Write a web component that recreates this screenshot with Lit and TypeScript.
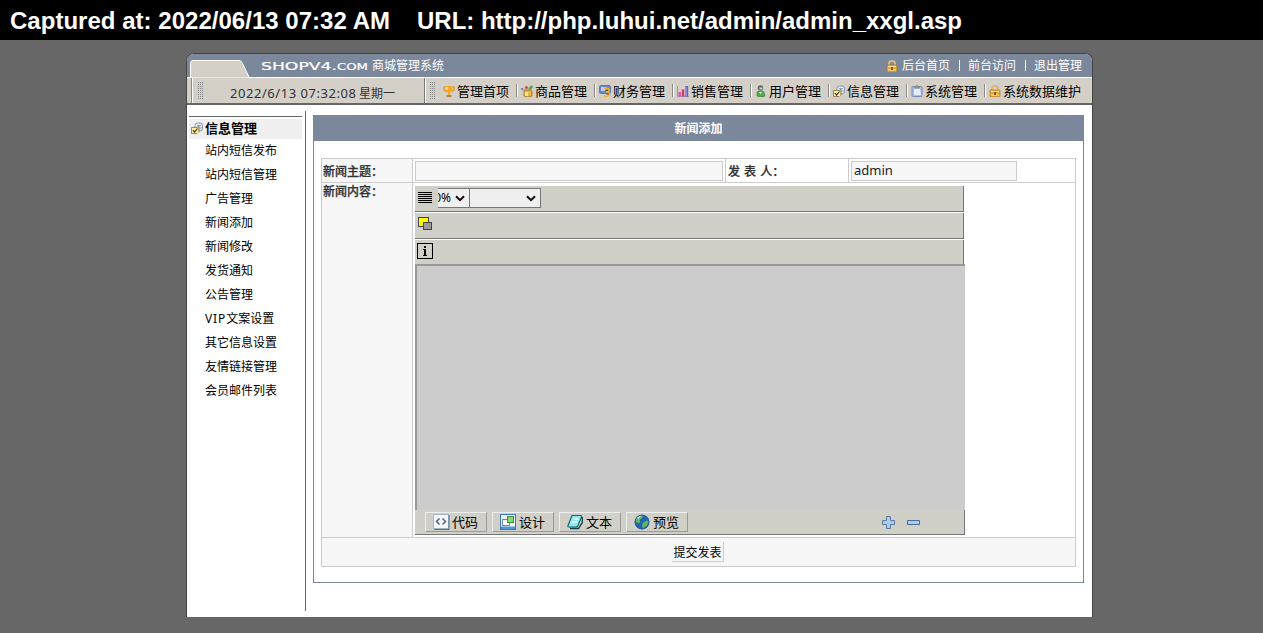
import { LitElement, html, css, svg } from "lit";
import { customElement } from "lit/decorators.js";

const icon = (name: string, size = 12) =>
  html`<svg class="ico" width=${size} height=${size} viewBox="0 0 12 12">${glyphs[name]}</svg>`;

const lock = svg`<path d="M3 6V3.500Q3 1 6 1t3 2.500V6" fill="none" stroke="#d9b684" stroke-width="2"/><rect x="1" y="5" width="10" height="7" rx="1" fill="#e5a93c" stroke="#a8752c" stroke-width=".7"/><path d="M2 6.500h8M2 10h8" stroke="#ffe39a"/><path d="M6 7v3" stroke="#7b4308" stroke-width="1.600"/>`;
const pad = svg`<rect x="4" y="1" width="7.500" height="8" rx="2.500" fill="#e6eef9" stroke="#7d93c0"/><path d="M6 3.500h4M7 6h4" stroke="#8ea6d2"/><path d="M.5 5.500H6l2-1.500v5.500l-2 2H.5z" fill="#e9c75c" stroke="#907033" stroke-width=".8"/><rect x="1" y="6" width="6" height="5" fill="#fff0a8"/><path d="M2 8l1.500 2L6.500 6.500" fill="none" stroke="#222" stroke-width="1.100"/>`;

const glyphs: Record<string, unknown> = {
  lock,
  pad,
  cup: svg`<path d="M2.500 2H.8v2q0 2 2.500 2M9.500 2h1.700v2q0 2-2.500 2" fill="none" stroke="#e09a22" stroke-width="1.200"/><path d="M2.500 1h7v3.500Q9 7.500 7 8v2H5V8Q3 7.500 2.500 4.500z" fill="#f5a926"/><path d="M4 2v3" stroke="#ffe79c" stroke-width="1.300"/><path d="M3.500 10h5v2h-5z" fill="#b0834a"/>`,
  goods: svg`<path d="M3 5h7l1 2v4q-4 2-8 0V7z" fill="#e2b44c" stroke="#9a6d1c" stroke-width=".8"/><path d="M4 7h3v4H4z" fill="#ffe28c"/><path d="M7 4l3-4 2 2-2 3z" fill="#6f9a5c"/><circle cx="5.500" cy="2.500" r="1.500" fill="#c44f5f"/><circle cx="1.200" cy="4" r="1.100" fill="#5d62c8"/>`,
  money: svg`<rect x=".5" y=".5" width="11" height="8" rx="1" fill="#6687c9" stroke="#6478a8"/><path d="M2 2h5v4H2z" fill="#b9cff3"/><path d="M5 4q5-2 5 1 0 2-3 2 4 0 3 3-1 2-5 1" fill="none" stroke="#e9b23c" stroke-width="1.700"/><path d="M6 5.500h3M7 9h3" stroke="#634319" stroke-width=".8"/>`,
  chart: svg`<path d="M.5 1v10.500H12" fill="none" stroke="#9c8fb0"/><path d="M1.500 7H4v4.500H1.500z" fill="#d15d9b"/><path d="M4.800 4.500h2.500v7H4.800z" fill="#c83c70"/><path d="M8.200 1h3v10.500h-3z" fill="#6b62c5"/><path d="M9 2v9" stroke="#aaa8f2"/>`,
  user: svg`<circle cx="5.500" cy="3" r="2.800" fill="#616a61"/><path d="M4.500 2.500h3v2h-3z" fill="#c9cfc5"/><path d="M2 7q3.500-3 7 0l1 4q-4 2-8 0z" fill="#54ad4b" stroke="#3b7739" stroke-width=".6"/><path d="M4 7l1.500 2L7 7" fill="#eef9e8"/>`,
  clip: svg`<rect x="1" y="1.500" width="10" height="10" rx="1" fill="#a9bfe2" stroke="#7186b2" stroke-width=".9"/><path d="M3 4h6l1 6H3z" fill="#e4edfb"/><path d="M3.500 3q0-2 2.500-2.500Q8.500 1 8.500 3z" fill="#a6a368" stroke="#74734b" stroke-width=".5"/>`,
};

const NAV: [string, string][] = [
  ["cup", "管理首项"], ["goods", "商品管理"], ["money", "财务管理"], ["chart", "销售管理"],
  ["user", "用户管理"], ["pad", "信息管理"], ["clip", "系统管理"], ["lock", "系统数据维护"],
];
const SIDE = ["站内短信发布", "站内短信管理", "广告管理", "新闻添加", "新闻修改", "发货通知", "公告管理", html`<span class="vip">VIP</span>文案设置`, "其它信息设置", "友情链接管理", "会员邮件列表"];

const MODES = [
  { label: "代码", art: svg`<rect x=".5" y=".5" width="15" height="14" fill="#f6f9fc" stroke="#a4b5c4"/><path d="M1 15.500h15V1" fill="none" stroke="#54718d"/><path d="M6.500 4.500l-3 3 3 3M9.500 4.500l3 3-3 3" fill="none" stroke="#566b80" stroke-width="1.600"/>` },
  { label: "设计", art: svg`<rect x=".5" y=".5" width="15" height="15" fill="#e9f3fc" stroke="#3e78b4"/><path d="M1 12.500h14v2.500H1z" fill="#5295d4"/><rect x="2.500" y="5.500" width="7" height="6" fill="#fff" stroke="#6c8bad"/><rect x="7.500" y="2.500" width="6" height="6" fill="#8fd572" stroke="#408b3b"/>` },
  { label: "文本", art: svg`<path d="M5 1.500h8.500q1.500 0 1 1.500L11 11.500q-.5 1.500-2 1.500H1.500q-1 0-.5-1.500z" fill="#8eeaec" stroke="#12616b" stroke-width="1.100"/><path d="M15.300 3v5.500L11.500 14.500H3" fill="none" stroke="#123f4d" stroke-width="1.300"/><path d="M6.500 5h5M5 8h5" stroke="#e6ffff" stroke-width="1.300"/>` },
  { label: "预览", art: svg`<circle cx="8" cy="8" r="7.300" fill="#2563ad"/><path d="M2 4.500q3-4 7-3l-1 3-2 1v3l-2 1-2-2zM9 8.500l4-2 2 1-2 4-4 3-1-3z" fill="#59b760"/><path d="M3 3.500q2-2 4-1.500L4 5.500z" fill="#c3e9e0"/><circle cx="8" cy="8" r="7" fill="none" stroke="#1f5a95" stroke-width=".8"/>` },
];

@customElement("app-root")
export class AppRoot extends LitElement {
  static styles = css`
    :host { display: block; width: 1263px; height: 633px; overflow: hidden; background: #676767; color: #000;
      font: 12px/16px "Noto Sans", "Noto Sans CJK SC", sans-serif; }
    * { box-sizing: border-box; }
    svg { display: block; flex: none; }
    .banner { height: 40px; background: #000; }
    .page { width: 907px; margin: 13px 0 0 186px; height: 564px; background: #fff; border: solid #444; border-width: 1px 1px 0; border-radius: 8px 8px 0 0; overflow: hidden; }
    .top { height: 23px; background: #7b879b; display: flex; }
    .brand { margin-left: 11px; }
    .links { margin-left: auto; display: flex; align-items: center; padding: 0 10px 0 0; color: #fff; }
    .links .ico { margin-right: 4px; }
    .bar { width: 1px; height: 11px; background: #fff; margin: 0 8px 0 9px; }
    .nav { height: 28px; background: #d4d0c8; border-top: 1px solid #fff; border-bottom: 2px solid #666; display: flex; }
    .clock { width: 238px; border-right: 1px solid #777; display: flex; align-items: center; }
    .edge { width: 2px; margin: 0 4px; height: 25px; border-left: 1px solid #888; background: #fff; }
    .grip { width: 6px; height: 18px; flex: none; background: conic-gradient(#888 25%, transparent 0) 0 0 / 2px 2px; }
    .menu { display: flex; align-items: center; border-left: 1px solid #fff; padding-left: 3px; font-size: 13px; }
    .menu .grip { margin-right: 8px; }
    .item { display: flex; align-items: center; white-space: nowrap; }
    .item .ico { margin-right: 2px; }
    .sep { width: 1px; height: 13px; background: #888; margin: 0 4px 0 7px; box-shadow: 1px 0 #fff; }
    .body { display: flex; height: 512px; }
    .side { width: 119px; height: 500px; margin-top: 6px; padding: 5px 3px 0 2px; border-right: 1px solid #666; }
    .head { display: flex; align-items: center; height: 23px; border-top: 1px solid #666; box-shadow: inset 0 2px #fff; background: #f0f0f0; font-size: 13px; line-height: 14px; font-weight: bold; padding: 0 0 1px 2px; }
    .head .ico { margin-right: 2px; }
    .link { height: 24px; line-height: 24px; padding-left: 16px; }
    .vip { letter-spacing: .9px; }
    .card { margin: 10px 0 0 7px; width: 771px; height: 468px; border: 1px solid #7b879b; }
    .title { height: 26px; margin-top: -1px; background: #7b879b; color: #fff; font-weight: bold; text-align: center; line-height: 27px; }
    .grid { display: grid; margin: 17px 7px 0; width: 755px; height: 409px; color: #333; font-weight: 500;
      grid-template: 23px 354px 28px / 90px 312px 122px 226px; gap: 1px; padding: 1px; background: #ccc; }
    .grid > div { background: #fff; padding: 2px 2px; }
    .grid > .shade { background: #f7f7f7; padding-left: 1px; }
    .grid > .wide { grid-column: 2 / 5; padding-top: 3px; }
    .grid > .all { grid-column: 1 / 5; text-align: center; padding-top: 4px; }
    .lab, .content { -webkit-text-stroke: .25px #333; }
    .lab { line-height: 21px; }
    .author { word-spacing: 1px; }
    .grid > .content { padding-top: 1px; }
    .field { height: 20px; border: 1px solid #ccc; background: #f7f7f7; width: 308px; line-height: 17px; padding-left: 2px; color: #222; font-size: 13px; font-weight: 400; }
    .field.short { width: 166px; }
    .editor { width: 550px; height: 349px; display: flex; flex-direction: column; }
    .tools { width: 549px; height: 26px; margin-bottom: 1px; background: #d0cfc8; border: solid #777; border-width: 0 1px 1px 0; display: flex; align-items: center; padding: 0 0 1px 2px; flex: none; }
    .tools.last { margin: 0; height: 24px; border-bottom: 0; padding-bottom: 2px; }
    .drop { height: 20px; border: 1px solid #767676; background: #efefef; display: flex; align-items: center; justify-content: flex-end; padding-right: 4px; color: #000; width: 72px; overflow: hidden; }
    .drop.cut { width: 32px; border-left: 0; margin: 0 -1px 0 5px; }
    .drop span { margin-right: 4px; font-weight: 400; }
    .area { flex: 1; background: #ccc; border: solid #999; border-width: 2px 0 0 2px; }
    .modes { height: 25px; flex: none; background: #d0cfc8; border: solid #777; border-width: 0 1px 1px 0; display: flex; align-items: center; padding: 0 44px 0 10px; gap: 5px; color: #000; font-size: 13px; font-weight: 400; }
    .mode { width: 62px; height: 20px; border: 1px solid; border-color: #eee #999 #999 #eee; display: flex; align-items: center; gap: 2px; padding-left: 7px; }
    .zoomers { margin-left: auto; display: flex; gap: 12px; align-items: center; }
    .send { display: inline-block; height: 20px; line-height: 21px; border: solid #ccc; border-width: 0 1px 1px 0; padding: 0 1px; color: #000; font-weight: 400; }
  `;

  private chevron() {
    return html`<svg width="10" height="7" viewBox="0 0 10 7"><path d="M1 1.200l4 4 4-4" fill="none" stroke="#111" stroke-width="2"/></svg>`;
  }

  render() {
    return html`
      <div class="banner">
        <svg width="1263" height="40" font-family="Liberation Sans, Arial, sans-serif" font-size="24" font-weight="bold" fill="#fff">
          <text x="10" y="29" textLength="380">Captured at: 2022/06/13 07:32 AM</text>
          <text x="417" y="29" textLength="545">URL: http://php.luhui.net/admin/admin_xxgl.asp</text>
        </svg>
      </div>
      <div class="page">
        <div class="top">
          <svg width="63" height="24" viewBox="0 0 63 24"><path d="M3.500 24V9Q3.500 6.500 6 6.500h46q2 0 3 2L62.500 24z" fill="#d4d0c8" stroke="#fff"/></svg>
          <svg class="brand" width="190" height="23" fill="#fff">
            <text x="0" y="16" font-family="DejaVu Sans" font-size="10.500" textLength="76" lengthAdjust="spacingAndGlyphs" stroke="#fff" stroke-width=".2">SHOPV4.</text>
            <text x="76" y="16" font-family="DejaVu Sans" font-size="9" textLength="31" lengthAdjust="spacingAndGlyphs" stroke="#fff" stroke-width=".2">COM</text>
            <text x="111" y="16" font-family="Noto Sans CJK SC" font-size="12">商城管理系统</text>
          </svg>
          <div class="links">${icon("lock")}<span>后台首页</span><i class="bar"></i><span>前台访问</span><i class="bar"></i><span>退出管理</span></div>
        </div>
        <div class="nav">
          <div class="clock"><i class="edge"></i><i class="grip"></i>
            <svg width="200" height="24" fill="#333"><text x="27" y="19" font-family="Noto Sans" font-size="13" textLength="126">2022/6/13 07:32:08</text><text x="156" y="19" font-family="Noto Sans CJK SC" font-size="12">星期一</text></svg>
          </div>
          <div class="menu"><i class="grip"></i>
            ${NAV.map(([name, label], i) => html`${i ? html`<i class="sep"></i>` : ""}<span class="item">${icon(name)}${label}</span>`)}
          </div>
        </div>
        <div class="body">
          <div class="side">
            <div class="head">${icon("pad")}信息管理</div>
            ${SIDE.map((t) => html`<div class="link">${t}</div>`)}
          </div>
          <div class="card">
            <div class="title">新闻添加</div>
            <div class="grid">
              <div class="shade lab">新闻主题：</div>
              <div><div class="field"></div></div>
              <div class="lab author">发 表 人：</div>
              <div><div class="field short">admin</div></div>
              <div class="shade content">新闻内容：</div>
              <div class="wide">
                <div class="editor">
                  <div class="tools">
                    <svg width="16" height="12"><path d="M1 .5h14M1 2.500h14M1 4.500h14M1 6.500h14M1 8.500h14M1 10.500h14" stroke="#000"/></svg>
                    <div class="drop cut"><span>0%</span>${this.chevron()}</div>
                    <div class="drop">${this.chevron()}</div>
                  </div>
                  <div class="tools">
                    <svg width="16" height="16"><rect x="1.500" y=".5" width="10" height="9" fill="#ff0" stroke="#444"/><rect x="6.500" y="5.500" width="8" height="7" fill="#999" stroke="#444"/></svg>
                  </div>
                  <div class="tools last">
                    <svg width="16" height="16"><rect x=".5" y=".5" width="15" height="15" fill="none" stroke="#000"/><path d="M7 3h2v2H7zM6 6h3v6h1v1H6v-1h1V7H6z"/></svg>
                  </div>
                  <div class="area"></div>
                  <div class="modes">
                    ${MODES.map((m) => html`<div class="mode"><svg width="17" height="16">${m.art}</svg>${m.label}</div>`)}
                    <div class="zoomers">
                      <svg width="13" height="13"><path d="M4.500.5h4v4h4v4h-4v4h-4v-4h-4v-4h4z" fill="#a9cdf2" stroke="#5d7898"/></svg>
                      <svg width="13" height="5"><path d="M.5.5h12v4H.5z" fill="#a9cdf2" stroke="#4d6c91"/></svg>
                    </div>
                  </div>
                </div>
              </div>
              <div class="shade all"><span class="send">提交发表</span></div>
            </div>
          </div>
        </div>
      </div>`;
  }
}
